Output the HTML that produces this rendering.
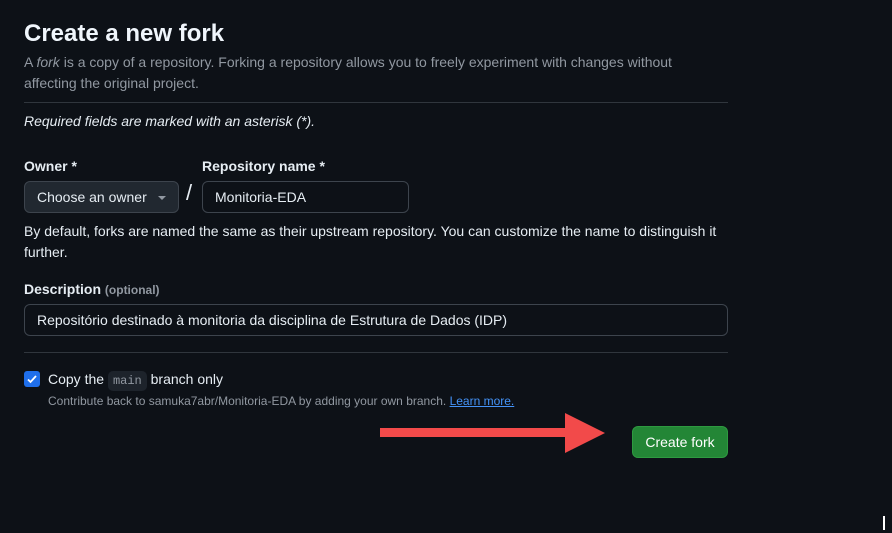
<!DOCTYPE html>
<html><head><style>
body{margin:0;background:#0d1117;width:892px;height:533px;overflow:hidden;font-family:"Liberation Sans",sans-serif;color:#e6edf3;position:relative}
.a{position:absolute;white-space:nowrap}
h1{position:absolute;left:24px;top:20px;margin:0;font-size:24px;font-weight:bold;color:#f0f6fc}
.m{color:#9198a1;font-size:14px}
.hr{position:absolute;left:24px;width:704px;height:1px;background:#30363d}
.lbl{font-weight:bold;font-size:14px}
.box{position:absolute;border:1px solid #3d444d;border-radius:6px;box-sizing:border-box;font-size:14px;padding-left:12px;display:flex;align-items:center;background:#0d1117}
</style></head><body>
<h1>Create a new fork</h1>
<div class="a m" style="left:24px;top:52px;line-height:21px">A <i>fork</i> is a copy of a repository. Forking a repository allows you to freely experiment with changes without<br>affecting the original project.</div>
<div class="hr" style="top:102px"></div>
<div class="a" style="left:24px;top:113px;font-size:14px;font-style:italic">Required fields are marked with an asterisk (*).</div>
<div class="a lbl" style="left:24px;top:158px">Owner *</div>
<div class="a lbl" style="left:202px;top:158px">Repository name *</div>
<div class="box" style="left:24px;top:181px;width:155px;height:32px;background:#212830">Choose an owner<span style="position:absolute;left:133px;top:14px;border:4px solid transparent;border-top-color:#9198a1"></span></div>
<div class="a" style="left:186px;top:180px;font-size:22px">/</div>
<div class="box" style="left:202px;top:181px;width:207px;height:32px">Monitoria-EDA</div>
<div class="a" style="left:24px;top:221px;font-size:14px;line-height:21px">By default, forks are named the same as their upstream repository. You can customize the name to distinguish it<br>further.</div>
<div class="a lbl" style="left:24px;top:281px">Description <span style="font-size:12px;color:#9198a1">(optional)</span></div>
<div class="box" style="left:24px;top:304px;width:704px;height:32px">Repositório destinado à monitoria da disciplina de Estrutura de Dados (IDP)</div>
<div class="hr" style="top:352px"></div>
<div class="a" style="left:24px;top:371px;width:16px;height:16px;background:#1f6feb;border-radius:3px"><svg width="16" height="16" viewBox="0 0 16 16"><path d="M4 8.5l2.5 2.5L12 5" stroke="#fff" stroke-width="1.8" fill="none"/></svg></div>
<div class="a" style="left:48px;top:371px;font-size:14px">Copy the <span style="font-family:'Liberation Mono',monospace;font-size:12px;background:#1d232b;padding:3px 5px;border-radius:5px;color:#9198a1">main</span> branch only</div>
<div class="a" style="left:48px;top:394px;font-size:12px;color:#9198a1">Contribute back to samuka7abr/Monitoria-EDA by adding your own branch. <span style="color:#4493f8;text-decoration:underline">Learn more.</span></div>
<div class="a" style="left:380px;top:428px;width:186px;height:9px;background:#f24a4a"></div>
<div class="a" style="left:565px;top:413px;width:0;height:0;border-top:20px solid transparent;border-bottom:20px solid transparent;border-left:40px solid #f24a4a"></div>
<div class="a" style="left:632px;top:426px;width:96px;height:32px;background:#238636;border-radius:6px;font-size:14px;color:#fff;display:flex;align-items:center;justify-content:center;box-sizing:border-box;border:1px solid #2e9a40">Create fork</div>
<div class="a" style="left:883px;top:516px;width:2px;height:14px;background:#fff"></div>
</body></html>
